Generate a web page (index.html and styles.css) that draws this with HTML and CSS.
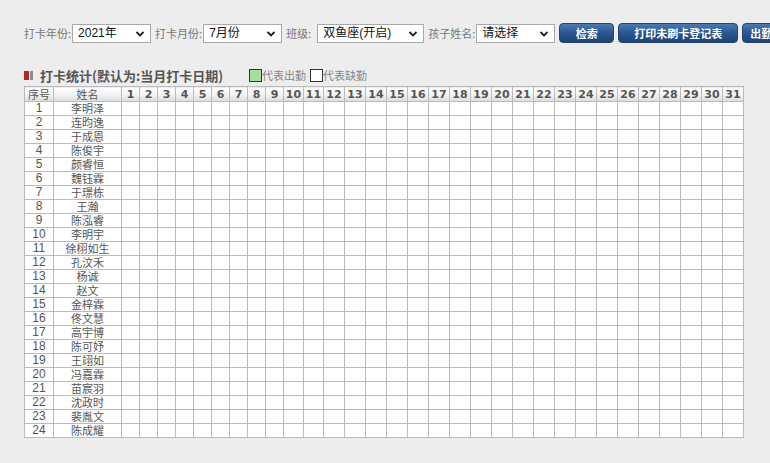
FILE: index.html
```html
<!DOCTYPE html>
<html lang="zh-CN">
<head>
    <meta charset="UTF-8">
    <title>打卡统计</title>
    <link rel="stylesheet" href="styles.css">
</head>
<body>
    <div class="toolbar">
        <label class="lbl">打卡年份:</label>
        <span class="sel sel-sm">2021年<svg viewBox="0 0 10 10"><path d="M1.5 3 L5 6.5 L8.5 3" /></svg></span>
        <label class="lbl">打卡月份:</label>
        <span class="sel sel-sm">7月份<svg viewBox="0 0 10 10"><path d="M1.5 3 L5 6.5 L8.5 3" /></svg></span>
        <label class="lbl lbl-short">班级:</label>
        <span class="sel sel-lg">双鱼座(开启)<svg viewBox="0 0 10 10"><path d="M1.5 3 L5 6.5 L8.5 3" /></svg></span>
        <label class="lbl">孩子姓名:</label>
        <span class="sel sel-sm">请选择<svg viewBox="0 0 10 10"><path d="M1.5 3 L5 6.5 L8.5 3" /></svg></span>
        <button class="btn btn-search">检索</button>
        <button class="btn btn-print">打印未刷卡登记表</button>
        <button class="btn btn-export">出勤导出</button>
    </div>

    <div class="title-row">
        <span class="mark"><i class="red"></i><i class="grey"></i></span>
        <h2>打卡统计(默认为:当月打卡日期)</h2>
        <span class="legend"><i class="box green"></i>代表出勤</span>
        <span class="legend"><i class="box"></i>代表缺勤</span>
    </div>

    <table class="grid" id="grid">
        <colgroup id="cols"></colgroup>
        <thead><tr id="head"></tr></thead>
        <tbody id="rows"></tbody>
    </table>

    <script>
        const names = ['李明泽', '连昀逸', '于成恩', '陈俊宇', '颜睿恒', '魏钰霖', '于璟栋', '王瀚',
            '陈泓睿', '李明宇', '徐栩如生', '孔汶禾', '杨诚', '赵文', '金梓霖', '佟文慧',
            '高宇博', '陈可妤', '王翊如', '冯嘉霖', '苗宸羽', '沈政时', '裴胤文', '陈成耀'];

        const cols = document.getElementById('cols');
        const head = document.getElementById('head');
        const rows = document.getElementById('rows');

        // column widths: 1-9 narrow, 10-11 medium, rest wide
        const widths = [29, 68];
        for (let d = 1; d <= 31; d++) {
            widths.push(d <= 9 ? 18 : (d <= 11 ? 20 : 21));
        }
        widths.forEach(w => {
            const c = document.createElement('col');
            c.style.width = w + 'px';
            cols.appendChild(c);
        });

        let h = '<th class="plain">序号</th><th class="plain">姓名</th>';
        for (let d = 1; d <= 31; d++) h += '<th>' + d + '</th>';
        head.innerHTML = h;

        let html = '';
        names.forEach((n, i) => {
            html += '<tr><td class="no">' + (i + 1) + '</td><td class="name">' + n + '</td>';
            for (let d = 1; d <= 31; d++) html += '<td></td>';
            html += '</tr>';
        });
        rows.innerHTML = html;
    </script>
</body>
</html>
```

FILE: styles.css
```css
body {
    margin: 0;
    background: #ededed;
    font-family: "Liberation Sans", "Noto Sans CJK SC", sans-serif;
    font-size: 12px;
    color: #555;
    width: 770px;
    overflow: hidden;
}

/* toolbar */
.toolbar {
    display: flex;
    align-items: center;
    white-space: nowrap;
    padding: 23px 0 0 24px;
    height: 20px;
}

.lbl {
    font-family: "Noto Sans CJK SC", sans-serif;
    font-size: 11px;
    color: #777;
    margin-right: 1px;
    flex-shrink: 0;
}

.lbl-short {
    margin-right: 6px;
}

.sel {
    position: relative;
    display: inline-block;
    box-sizing: border-box;
    height: 19px;
    line-height: 17px;
    border: 1px solid #a9a9a9;
    background: #fff;
    color: #111;
    font-size: 12px;
    padding-left: 5px;
    margin-right: 4px;
    flex-shrink: 0;
}

.sel svg {
    position: absolute;
    right: 5px;
    top: 4px;
    width: 10px;
    height: 10px;
    fill: none;
    stroke: #222;
    stroke-width: 1.8;
}

.sel-sm { width: 79px; }
.sel-lg { width: 107px; }

.btn {
    flex-shrink: 0;
    height: 20px;
    box-sizing: border-box;
    border: 1px solid #22446e;
    border-radius: 4px;
    background: linear-gradient(#4a7ab3, #2b5690 50%, #1d4378);
    color: #fff;
    font-family: "Noto Sans CJK SC", sans-serif;
    font-size: 11px;
    font-weight: bold;
    line-height: 16px;
    padding: 0;
    margin-right: 4px;
}

.btn-search { width: 55px; }
.btn-print { width: 120px; }
.btn-export { width: 60px; }

/* title */
.title-row {
    display: flex;
    align-items: center;
    padding-left: 24px;
    margin-top: 23px;
    height: 18px;
}

.mark {
    display: flex;
    margin-right: 7px;
}

.mark i {
    display: block;
    height: 9px;
}

.mark .red { width: 5px; background: #b0282c; margin-right: 1px; }
.mark .grey { width: 3px; background: #8d8d8d; }

.title-row h2 {
    margin: 0 26px 0 0;
    font-family: "Noto Sans CJK SC", sans-serif;
    font-size: 13px;
    font-weight: bold;
    color: #555;
}

.legend {
    display: flex;
    align-items: flex-end;
    font-family: "Noto Sans CJK SC", sans-serif;
    font-size: 11px;
    color: #888;
    margin-right: 4px;
}

.box {
    display: block;
    width: 11px;
    height: 11px;
    border: 1px solid #333;
    background: #fff;
    margin-bottom: 1px;
}

.box.green { background: #a3e0a0; }

/* grid */
.grid {
    margin: 2px 0 0 24px;
    border-collapse: collapse;
    table-layout: fixed;
    width: 720px;
    background: #fff;
}

.grid th,
.grid td {
    border: 1px solid #bbb;
    padding: 0;
    text-align: center;
    white-space: nowrap;
}

.grid th {
    height: 14px;
    line-height: 13px;
    background: linear-gradient(#fff, #f3f3f3 50%, #dcdcdc);
    font-family: "DejaVu Sans", sans-serif;
    font-size: 11px;
    font-weight: bold;
    color: #555;
}

.grid th.plain {
    font-family: "Noto Sans CJK SC", sans-serif;
    font-weight: normal;
    font-size: 11px;
}

.grid td {
    height: 13px;
    line-height: 13px;
}

.grid td.no {
    font-size: 12px;
    color: #555;
}

.grid td.name {
    font-family: "Noto Sans CJK SC", sans-serif;
    font-size: 11px;
    color: #555;
}
```
